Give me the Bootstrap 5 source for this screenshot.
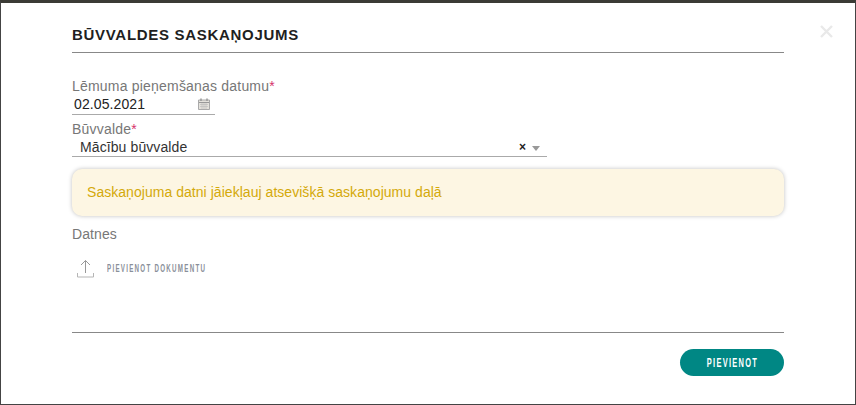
<!DOCTYPE html>
<html lang="lv">
<head>
    <meta charset="UTF-8">
    <meta name="viewport" content="width=device-width, initial-scale=1">
    <title>Būvvaldes saskaņojums</title>
    <link href="https://cdn.jsdelivr.net/npm/bootstrap@5.3.0/dist/css/bootstrap.min.css" rel="stylesheet">
    <style>
        body {
            font-family: "Liberation Sans", Arial, sans-serif;
            background: #fff;
            overflow: hidden;
        }

        .dlg-frame {
            position: relative;
            height: 405px;
            background: #fff;
            border-top: 3px solid #3b3b35;
            border-left: 1px solid #444;
            border-right: 1px solid #444;
            border-bottom: 1px solid #444;
            padding: 0 71px;
        }

        .dlg-close {
            position: absolute;
            top: 22px;
            right: 22px;
            width: 13px;
            height: 13px;
            padding: 0;
            border: 0;
            background: none;
            line-height: 0;
        }

        .dlg-title {
            height: 50px;
            margin: 0 0 25px;
            padding-top: 23px;
            font-size: 15px;
            line-height: 18px;
            font-weight: 700;
            letter-spacing: .7px;
            color: #1f1f1f;
            border-bottom: 1px solid #888;
        }

        .fld-label {
            display: block;
            margin: 0;
            font-size: 14px;
            line-height: 16px;
            letter-spacing: .2px;
            color: #777;
        }

        .fld-label i {
            font-style: normal;
            color: #d6336c;
        }

        .fld-date {
            width: 143px;
            height: 21px;
            padding-left: 2px;
            padding-right: 5px;
            margin-bottom: 6px;
            font-size: 14px;
            line-height: 19px;
            letter-spacing: .1px;
            color: #222;
            border-bottom: 1px solid #aaa;
        }

        .fld-select {
            width: 475px;
            height: 20px;
            padding-left: 8px;
            padding-right: 7px;
            font-size: 14px;
            line-height: 19px;
            letter-spacing: .1px;
            color: #333;
            border-bottom: 1px solid #aaa;
        }

        .sel-value {
            padding-top: 2px;
        }

        .sel-clear {
            font-size: 12px;
            font-weight: 700;
            color: #222;
            margin-right: 6px;
            line-height: 16px;
        }

        .sel-caret {
            width: 0;
            height: 0;
            margin-top: 3px;
            border-left: 4px solid transparent;
            border-right: 4px solid transparent;
            border-top: 5px solid #999;
        }

        .note-box {
            height: 47px;
            margin-top: 12px;
            padding: 0 15px;
            font-size: 14px;
            letter-spacing: .04px;
            color: #d4a90a;
            background: #fdf6e3;
            border-radius: 10px;
            box-shadow: 0 0 4px rgba(0, 0, 0, .25);
        }

        .files-label {
            margin: 10px 0 0;
            font-size: 14px;
            line-height: 16px;
            letter-spacing: .1px;
            color: #777;
        }

        .upload-row {
            height: 20px;
            margin-top: 16px;
            padding-left: 5px;
            gap: 13px;
        }

        .narrow-text {
            display: inline-block;
            font-size: 10px;
            font-weight: 700;
            letter-spacing: 2.05px;
            white-space: nowrap;
            transform: scaleX(.62);
            transform-origin: left center;
        }

        .upload-text {
            color: #8a8f99;
        }

        .dlg-foot {
            margin-top: 54px;
            padding-top: 16px;
            border-top: 1px solid #888;
        }

        .btn-add {
            width: 104px;
            height: 27px;
            padding: 0;
            background: #008784;
            border: 0;
            border-radius: 14px;
            color: #fff;
        }

        .btn-add .narrow-text {
            font-size: 12px;
            letter-spacing: 2.1px;
            transform-origin: center;
        }
    </style>
</head>
<body>

<div class="dlg-frame">
    <button class="dlg-close" type="button" aria-label="Aizvērt">
        <svg width="13" height="13" viewBox="0 0 13 13"><path d="M1 1L12 12M12 1L1 12" stroke="#e9e9e9" stroke-width="2.4" fill="none"/></svg>
    </button>

    <h5 class="dlg-title">BŪVVALDES SASKAŅOJUMS</h5>

    <label class="fld-label">Lēmuma pieņemšanas datumu<i>*</i></label>
    <div class="fld-date d-flex justify-content-between align-items-center">
        <span>02.05.2021</span>
        <svg width="12" height="12" viewBox="0 0 12 12">
            <path d="M0.5 2H11.5V11.5H0.5Z" fill="#e4e2dc" stroke="#aaa"/>
            <path d="M1 4.5H11" stroke="#999"/>
            <path d="M3 0.5V3M9 0.5V3" stroke="#999" stroke-width="1.5"/>
            <path d="M2 6.5H10M2 8.5H10M4 5V11M6 5V11M8 5V11" stroke="#bbb" stroke-width=".6"/>
        </svg>
    </div>

    <label class="fld-label">Būvvalde<i>*</i></label>
    <div class="fld-select d-flex align-items-center">
        <span class="sel-value flex-grow-1">Mācību būvvalde</span>
        <span class="sel-clear">×</span>
        <span class="sel-caret"></span>
    </div>

    <div class="note-box d-flex align-items-center">Saskaņojuma datni jāiekļauj atsevišķā saskaņojumu daļā</div>

    <p class="files-label">Datnes</p>

    <div class="upload-row d-flex align-items-center">
        <svg width="17" height="19" viewBox="0 0 17 19" class="flex-shrink-0">
            <path d="M8.5 14V1.5M4 6L8.5 1.5L13 6" stroke="#999" fill="none"/>
            <path d="M0.5 14V18H16.5V14" stroke="#b5b5b5" fill="none"/>
        </svg>
        <span class="narrow-text upload-text">PIEVIENOT DOKUMENTU</span>
    </div>

    <div class="dlg-foot d-flex justify-content-end">
        <button class="btn-add d-flex align-items-center justify-content-center" type="button">
            <span class="narrow-text">PIEVIENOT</span>
        </button>
    </div>
</div>

<script src="https://cdn.jsdelivr.net/npm/bootstrap@5.3.0/dist/js/bootstrap.bundle.min.js"></script>
</body>
</html>
